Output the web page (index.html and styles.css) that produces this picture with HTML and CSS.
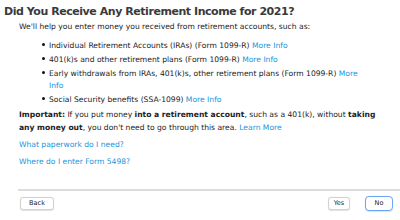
FILE: index.html
```html
<!DOCTYPE html>
<html>
<head>
<meta charset="utf-8">
<link rel="stylesheet" href="styles.css">
</head>
<body>
<div class="page">
  <h1 class="title">Did You Receive Any Retirement Income for 2021?</h1>
  <p class="intro">We'll help you enter money you received from retirement accounts, such as:</p>
  <ul class="list">
    <li>Individual Retirement Accounts (IRAs) (Form 1099-R) <a class="link">More Info</a></li>
    <li>401(k)s and other retirement plans (Form 1099-R) <a class="link">More Info</a></li>
    <li>Early withdrawals from IRAs, 401(k)s, other retirement plans (Form 1099-R) <a class="link">More</a> <a class="link">Info</a></li>
    <li>Social Security benefits (SSA-1099) <a class="link">More Info</a></li>
  </ul>
  <p class="important"><b>Important:</b> If you put money <b>into a retirement account</b>, such as a 401(k), without <b>taking</b> <b>any money out</b>, you don't need to go through this area. <a class="link">Learn More</a></p>
  <p class="qlink first"><a class="link">What paperwork do I need?</a></p>
  <p class="qlink second"><a class="link">Where do I enter Form 5498?</a></p>
  <div class="footer">
    <button class="btn btn-back">Back</button>
    <div class="right">
      <button class="btn btn-yes">Yes</button>
      <button class="btn btn-no">No</button>
    </div>
  </div>
</div>
</body>
</html>
```

FILE: styles.css
```css
html, body {
  margin: 0;
  padding: 0;
  background: #fff;
}
body {
  width: 400px;
  height: 220px;
  overflow: hidden;
  font-family: "DejaVu Sans", sans-serif;
  color: #222;
}
.page {
  padding-top: 4px;
}
.title {
  margin: 0 0 0 4px;
  font-size: 11px;
  line-height: 15px;
  font-weight: bold;
  color: #3a3a3a;
  letter-spacing: -0.45px;
}
.intro {
  margin: 2px 0 0 19px;
  font-size: 7.6px;
  line-height: 12px;
}
.list {
  list-style: none;
  margin: 7px 0 0 0;
  padding: 0 38px 0 49px;
  font-size: 7.6px;
  line-height: 12px;
}
.list li {
  margin-bottom: 2px;
}
.list li::before {
  content: "";
  display: inline-block;
  width: 3.5px;
  height: 3.5px;
  border-radius: 50%;
  background: #111;
  margin-left: -7.5px;
  margin-right: 4px;
  vertical-align: 2px;
}
.link {
  color: #1a96dc;
  text-decoration: none;
}
.important {
  margin: 2px 10px 0 19px;
  font-size: 7.6px;
  line-height: 13px;
}
.important b {
  font-weight: bold;
}
.qlink {
  margin: 0 0 0 19px;
  font-size: 7.6px;
  line-height: 12px;
}
.qlink.first {
  margin-top: 5px;
}
.qlink.second {
  margin-top: 5px;
}
.footer {
  margin: 21px 0 0 18px;
  border-top: 2px solid #dcdcdc;
  padding: 5px 7px 0 2px;
  display: flex;
  justify-content: space-between;
  align-items: center;
}
.right {
  display: flex;
  gap: 15px;
  align-items: center;
}
.btn {
  font-family: "DejaVu Sans", sans-serif;
  font-size: 6.5px;
  height: 13px;
  line-height: 11px;
  padding: 0;
  background: #fff;
  border: 1px solid #d2d2d2;
  border-radius: 3px;
  color: #222;
  box-shadow: 0 0.5px 1px rgba(0,0,0,0.12);
}
.btn-back { width: 34px; }
.btn-yes { width: 22px; }
.btn-no {
  width: 28px;
  border: 1.5px solid #6aa7f3;
  height: 15px;
  border-radius: 4px;
}
```
